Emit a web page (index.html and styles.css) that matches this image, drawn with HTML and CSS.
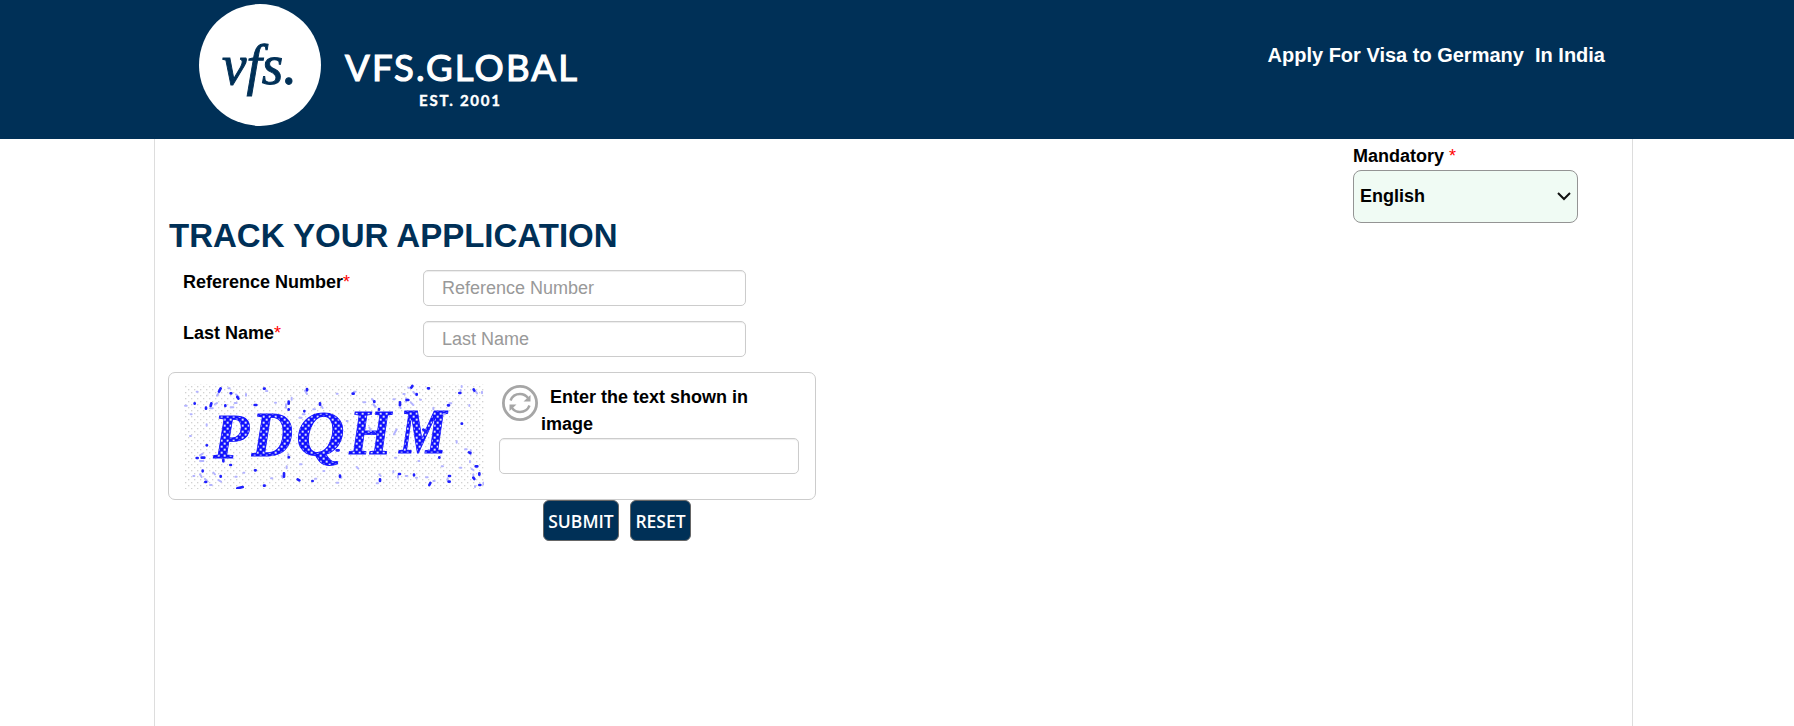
FILE: index.html
```html
<!DOCTYPE html>
<html lang="en">

<head>
    <meta charset="utf-8">
    <title>Track Your Application</title>
    <link rel="stylesheet" href="styles.css">
</head>

<body>

    <header class="header">
        <svg class="logo" width="400" height="139" viewBox="0 0 400 139">
            <circle cx="76" cy="65" r="61" fill="#fff"/>
            <text class="logo-mark" x="38" y="84" textLength="75" lengthAdjust="spacingAndGlyphs">vfs.</text>
            <text class="logo-name" x="161" y="81" textLength="232">VFS.GLOBAL</text>
            <text class="logo-est" x="235" y="106" textLength="81">EST. 2001</text>
        </svg>
        <div class="header-title">Apply For Visa to Germany&nbsp; In India</div>
    </header>

    <main class="container">

        <div class="language">
            <label for="lang">Mandatory <span class="required">*</span></label>
            <div class="select">
                <select id="lang" name="lang">
                    <option>English</option>
                </select>
                <svg class="caret" width="14" height="9" viewBox="0 0 14 9">
                    <path d="M1 1l6 6 6-6" fill="none" stroke="#111" stroke-width="2"/>
                </svg>
            </div>
        </div>

        <h1>TRACK YOUR APPLICATION</h1>

        <form class="track-form" action="#" method="post">

            <div class="form-group">
                <label for="refNo">Reference Number<span class="required">*</span></label>
                <input type="text" id="refNo" name="refNo" placeholder="Reference Number">
            </div>

            <div class="form-group">
                <label for="lastName">Last Name<span class="required">*</span></label>
                <input type="text" id="lastName" name="lastName" placeholder="Last Name">
            </div>

            <div class="captcha">
                <svg class="captcha-image" width="300" height="105" viewBox="72 69 900 315">
                    <defs>
                        <pattern id="dots" width="18" height="18" patternUnits="userSpaceOnUse">
                            <rect x="3" y="3" width="4" height="4" fill="#d2d2d2"/>
                            <rect x="12" y="12" width="4" height="4" fill="#d2d2d2"/>
                        </pattern>
                        <pattern id="mesh" width="18" height="18" patternUnits="userSpaceOnUse">
                            <rect width="18" height="18" fill="#1010ff"/>
                            <rect x="2" y="2" width="6" height="6" fill="#dfe3f4"/>
                            <rect x="11" y="11" width="6" height="6" fill="#dfe3f4"/>
                        </pattern>
                    </defs>
                    <rect x="72" y="69" width="900" height="315" fill="url(#dots)"/>
                    <g class="captcha-text">
                        <text x="160" y="290" textLength="108" lengthAdjust="spacingAndGlyphs">P</text>
                        <text x="275" y="286" textLength="124" lengthAdjust="spacingAndGlyphs">D</text>
                        <text x="408" y="283" textLength="146" lengthAdjust="spacingAndGlyphs">Q</text>
                        <text x="568" y="279" textLength="126" lengthAdjust="spacingAndGlyphs">H</text>
                        <text x="718" y="276" textLength="142" lengthAdjust="spacingAndGlyphs">M</text>
                    </g>
                    <path class="speck-light" d="M75 134h5M110 92h3M165 130l6-4M224 126h6M258 99v5M345 125h3M395 110v6M418 170h7M460 145h5M530 98h3M610 124h6M640 130l7 8M700 115h4M730 99h4M752 124l8 8M780 116h3M820 140v5M850 160h5M905 75v3M928 132v3M966 92v5M890 240v5M915 265h5M930 300v4M900 320h4M845 316h4M798 349h5M737 345h5M700 330v4M650 367h4M590 318l5 5M530 365h5M490 330h3M420 310h5M380 316v6M333 352h4M250 335h3M226 347h4M160 335l5 5M150 372h5M100 345h3M120 283l8-5M140 190v4M92 160h3M90 225h3M120 340l5 8M560 180h3M705 290h4M775 300h3M820 360h4M945 375v3M970 365v5M175 98l-4 6M205 82h4M228 100l8 8M150 142h8M212 139h8M318 90h4M378 130v10M435 89l6 10M428 160h6M484 135l4 6M582 92h5M636 114l5 6M718 133l4 8M745 80h5M760 93l8 8M868 127h6M902 87v3M948 92l3 5M738 112v10M710 205l-8 15M628 200l5 10M385 280v5M120 300h10M135 354l8 8M175 357l8 5M365 345l3 5M465 353h4M540 350h4M658 340l4 5M714 344v6M768 350h3M863 352v8M935 324l5 3M940 340v3M932 268v12"/>
                    <path class="speck" d="M182 82l-5 10M212 97h2M232 108l3 5M154 127l-2 8M196 133v2M138 140v3M104 127v1M284 132h5M312 83h2M386 122v6M386 145v1M441 84v4M433 150v1M480 127v4M578 98h3M643 121v2M657 144v2M757 75l-3 5M770 99v2M804 82h3M720 124v8M740 117h5M864 133h3M898 96h3M905 188h1M941 85l2 4M927 274l4 2M947 316h5M958 337v4M940 350l3 4M867 345h3M866 362h3M811 366l-3 6M717 339h3M660 355v5M540 344v3M457 360h1M413 355l5 3M372 337v10M386 289h1M312 374h2M285 328h2M232 382l16-4M211 312h2M182 345v2M128 329v2M136 363h2M110 291h3M125 290h8M958 372h3M838 289v1M762 341v2M140 253h1M530 268h6M790 206l8 6M640 216h2M190 296v5"/>
                </svg>
                <div class="captcha-entry">
                    <div class="captcha-label">
                        <svg class="refresh" width="36" height="36" viewBox="0 0 36 36" fill="none" stroke="#a6a6a6">
                            <circle cx="18" cy="18" r="16.6" stroke-width="2.8"/>
                            <path d="M8.500 15.500Q11 9 18 9Q23 9 26 13M27.500 20.500Q25 27 18 27Q13 27 10 23" stroke-width="2.400"/>
                            <path d="M28.500 10v6.500h-7zM7.500 26v-6.500h7z" fill="#a6a6a6" stroke="none"/>
                        </svg>
                        <label for="captcha">Enter the text shown in image</label>
                    </div>
                    <input type="text" id="captcha" name="captcha">
                </div>
            </div>

            <div class="buttons">
                <button type="submit" class="submit-btn">SUBMIT</button>
                <button type="reset" class="reset-btn">RESET</button>
            </div>

        </form>

    </main>

</body>

</html>
```
FILE: styles.css
```css
* {
    box-sizing: border-box;
}

body {
    margin: 0;
    background: #fff;
    color: #000;
    font-family: "Liberation Sans", Arial, sans-serif;
    font-size: 18px;
    overflow: hidden;
}

.header {
    display: flex;
    justify-content: space-between;
    height: 139px;
    padding: 0 189px 0 184px;
    background: #003057;
}

.logo-mark {
    fill: #003057;
    stroke: #003057;
    stroke-width: 1px;
    font-family: "Liberation Serif", serif;
    font-size: 58px;
    font-style: italic;
}

.logo-name {
    fill: #fff;
    stroke: #fff;
    stroke-width: 1.2px;
    font-family: Lato, sans-serif;
    font-size: 36.500px;
}

.logo-est {
    fill: #fff;
    stroke: #fff;
    stroke-width: .4px;
    font-family: Lato, sans-serif;
    font-size: 15px;
    font-weight: bold;
}

.header-title {
    padding-top: 44px;
    color: #fff;
    font-size: 20px;
    font-weight: bold;
    line-height: 23px;
}

.container {
    width: 1479px;
    height: 587px;
    margin-left: 154px;
    padding: 0 13px;
    border: 1px solid #ddd;
    border-width: 0 1px;
}

label {
    font-weight: bold;
}

.required {
    color: #f00;
    font-weight: normal;
}

.language {
    width: 225px;
    margin-left: 1185px;
    padding-top: 4px;
    line-height: 27px;
}

.select {
    display: grid;
    align-items: center;
}

.select select {
    grid-area: 1 / 1;
    width: 225px;
    height: 53px;
    padding: 0 0 2px 6px;
    border: 1px solid #949494;
    border-radius: 8px;
    background: #f0fbf4;
    color: #000;
    font: bold 18px "Liberation Sans", Arial, sans-serif;
    appearance: none;
}

.caret {
    grid-area: 1 / 1;
    justify-self: end;
    margin-right: 7px;
}

h1 {
    margin: -6px 0 0 1px;
    color: #003057;
    font-size: 33px;
    line-height: 38px;
}

.track-form {
    width: 648px;
    padding-top: 15px;
}

.form-group {
    display: flex;
    height: 51px;
    padding-left: 15px;
}

.form-group label {
    width: 240px;
    line-height: 25px;
}

.form-group input {
    width: 323px;
}

input {
    height: 36px;
    padding: 0 18px;
    border: 1px solid #ccc;
    border-radius: 5px;
    box-shadow: inset 0 1px 1px rgba(0, 0, 0, .075);
    font: 18px "Liberation Sans", Arial, sans-serif;
}

input::placeholder {
    color: #999;
}

.captcha {
    display: flex;
    gap: 15px;
    height: 128px;
    padding: 11px 15px;
    border: 1px solid #ccc;
    border-radius: 7px;
}

.captcha-text {
    fill: url(#mesh);
    stroke: #1010ff;
    stroke-width: 2.500px;
    font-family: "Liberation Serif", serif;
    font-size: 190px;
    font-style: italic;
    font-weight: bold;
}

.speck {
    fill: none;
    stroke: #2020ff;
    stroke-width: 8px;
    stroke-linecap: round;
}

.speck-light {
    fill: none;
    stroke: #b4b4ff;
    stroke-width: 6px;
    stroke-linecap: round;
}

.captcha-entry {
    width: 300px;
}

.captcha-label {
    display: flex;
    height: 54px;
}

.refresh {
    flex: none;
    margin: 1px 3px 0;
}

.captcha-label label {
    width: 220px;
    line-height: 27px;
    text-indent: 9px;
}

.captcha-entry input {
    width: 300px;
}

.buttons {
    display: flex;
    gap: 11px;
    padding-left: 375px;
}

button {
    height: 41px;
    padding: 0;
    border: 1px solid #666;
    border-radius: 6px;
    background: #003057;
    color: #fff;
    font: 600 17.500px "Open Sans", "Noto Sans", sans-serif;
}

.submit-btn {
    width: 76px;
}

.reset-btn {
    width: 61px;
}
```
